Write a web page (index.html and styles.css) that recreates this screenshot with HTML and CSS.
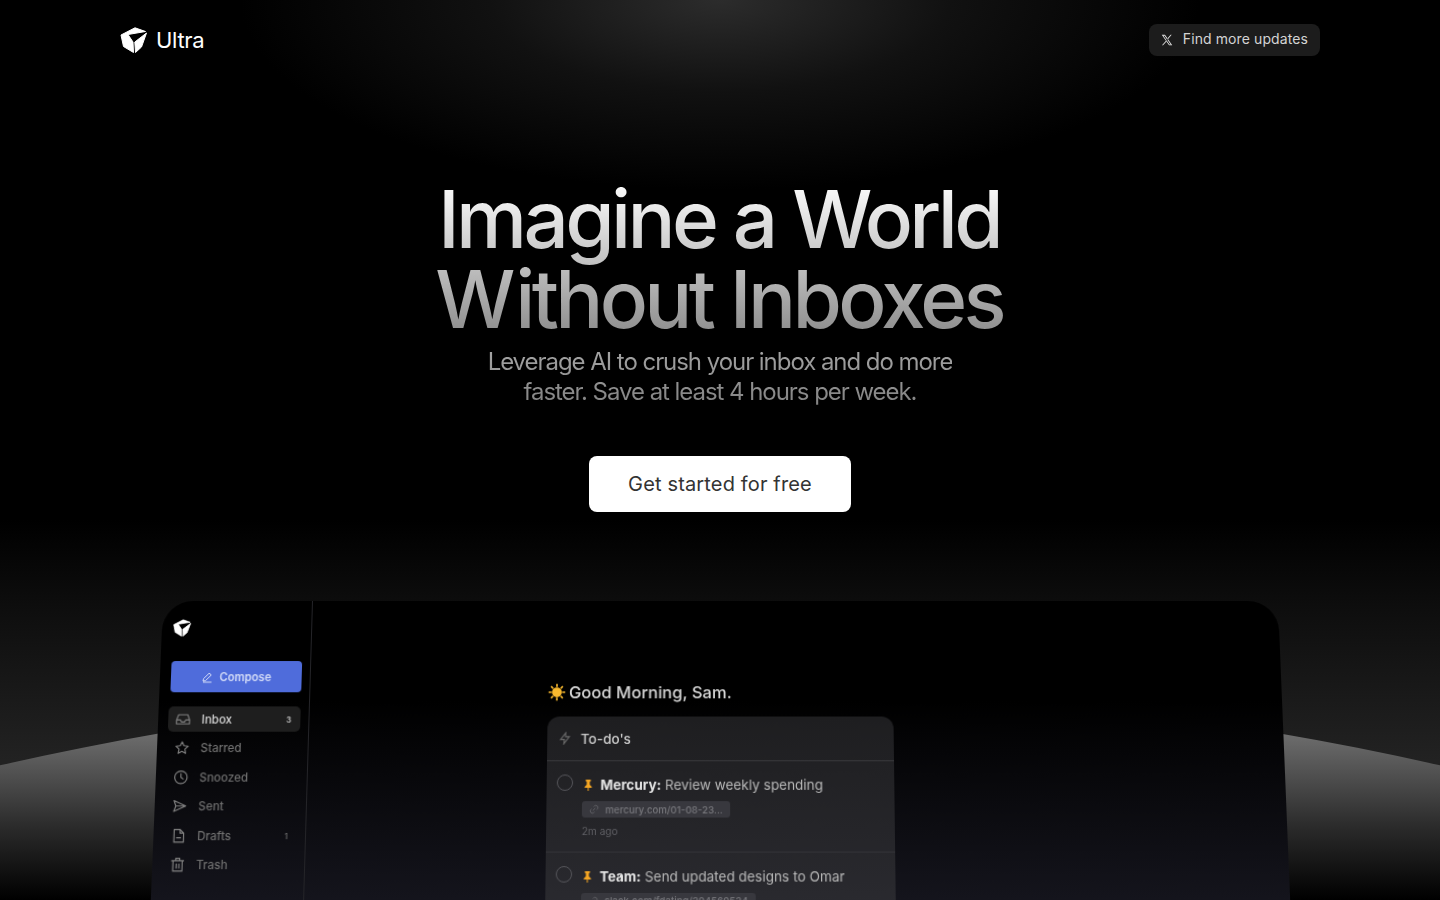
FILE: index.html
```html
<!DOCTYPE html>
<html lang="en">
<head>
    <title>Ultra - Imagine a World Without Inboxes</title>
    <link rel="stylesheet" href="styles.css">
</head>
<body>

<!-- Background glow and planet -->
<div class="top-glow"></div>
<div class="horizon-glow"></div>
<div class="planet"></div>

<header class="nav">
    <a class="brand" href="#">
        <svg class="brand-logo" viewBox="0 0 27 26"><path d="M1 8 15 .8 25.500 4.500 8 7.500 13 15 13.500 25.500 3.500 19.500Z" fill="#fff" stroke="#fff" stroke-linejoin="round"/><path d="M26.500 6 21.500 20 15.500 25.500 14.800 15Z" fill="#fff" stroke="#fff" stroke-linejoin="round"/></svg>
        <span>Ultra</span>
    </a>
    <a class="updates" href="#">
        <svg class="x-icon" viewBox="0 0 24 24"><path d="M3 3h5.500l12.500 18h-5.500L3 3Z M5.800 4.500l10.500 15h2L7.800 4.500h-2Z M20 3h-1.800l-6.300 7.200 1 1.400L20 3Z M10.600 12.800 3.400 21h1.800l6.300-7 -0.900-1.200Z" fill="#e4e4e4" fill-rule="evenodd"/></svg>
        Find more updates
    </a>
</header>

<main class="hero">
    <h1>Imagine a World<br><span class="wide-w">W</span>ithout Inboxes</h1>
    <p class="lead">Leverage AI to crush your inbox and do more<br>faster. Save at least 4 hours per week.</p>
    <a class="cta" href="#">Get started for free</a>
</main>

<!-- App preview tilted back a little -->
<section class="app">
    <aside class="sidebar">
        <svg class="app-logo" viewBox="0 0 27 26"><path d="M1 8 15 .8 25.500 4.500 8 7.500 13 15 13.500 25.500 3.500 19.500Z" fill="#fff" stroke="#fff" stroke-linejoin="round"/><path d="M26.500 6 21.500 20 15.500 25.500 14.800 15Z" fill="#fff" stroke="#fff" stroke-linejoin="round"/></svg>
        <div class="compose">
            <svg class="pen" viewBox="0 0 24 24"><path d="M4 20l1-5L16 4l4 4L9 19l-5 1Z M4 22h17" fill="none" stroke="#d5ddf8" stroke-width="2"/></svg>
            Compose
        </div>
        <ul class="menu">
            <li class="menu-item active">
                <svg viewBox="0 0 24 24"><path d="M2 13l3-8h14l3 8v6H2v-6Z M2 13h6l1.500 3h5L16 13h6" /></svg>
                <span>Inbox</span><em>3</em>
            </li>
            <li class="menu-item">
                <svg viewBox="0 0 24 24"><path d="M12 3l2.800 5.900 6.400.8-4.700 4.400 1.200 6.400L12 17.400l-5.700 3.100 1.200-6.400-4.700-4.400 6.400-.8L12 3Z"/></svg>
                <span>Starred</span>
            </li>
            <li class="menu-item">
                <svg viewBox="0 0 24 24"><circle cx="12" cy="12" r="9.500"/><path d="M12 6.500V12l3.500 2.500"/></svg>
                <span>Snoozed</span>
            </li>
            <li class="menu-item">
                <svg viewBox="0 0 24 24"><path d="M3 4l18 8-18 8 3-8-3-8Z M6 12h15"/></svg>
                <span>Sent</span>
            </li>
            <li class="menu-item">
                <svg viewBox="0 0 24 24"><path d="M5 2.500h9l5.500 5.500v13.500H5v-19Z M14 2.500V8h5.500 M9 15h6"/></svg>
                <span>Drafts</span><em>1</em>
            </li>
            <li class="menu-item">
                <svg viewBox="0 0 24 24"><path d="M3 6h18 M9 6V2.500h6V6 M5 6v15.500h14V6 M10 11v6 M14 11v6"/></svg>
                <span>Trash</span>
            </li>
        </ul>
    </aside>

    <div class="inbox">
        <h2 class="greeting"><svg class="sun" viewBox="0 0 24 24"><circle cx="12" cy="12" r="6.500" fill="#f9b92e"/><path d="M12 1v4 M12 19v4 M1 12h4 M19 12h4 M4.200 4.200l2.800 2.800 M17 17l2.800 2.800 M4.200 19.800 7 17 M17 7l2.800-2.800" stroke="#f9b92e" stroke-width="2.200"/></svg>Good Morning, Sam.</h2>
        <div class="todo-card">
            <div class="todo-head">
                <svg class="bolt" viewBox="0 0 24 24"><path d="M13.500 2 4 14h7l-1 8 10-13h-7l.5-7Z"/></svg>
                To-do's
            </div>
            <div class="todo-row">
                <span class="check"></span>
                <div class="todo-body">
                    <p class="todo-title"><svg class="pin" viewBox="0 0 24 24"><path d="M7 2h10v3l-2 1v6l4 4v2h-6v6h-2v-6H5v-2l4-4V6L7 5V2Z" fill="#f5a623"/></svg><strong>Mercury:</strong> Review weekly spending</p>
                    <span class="chip"><svg viewBox="0 0 24 24"><path d="M9 15l6-6 M11 6l2-2a5 5 0 0 1 7 7l-2 2 M13 18l-2 2a5 5 0 0 1-7-7l2-2"/></svg>mercury.com/01-08-23...</span>
                    <p class="todo-time">2m ago</p>
                </div>
            </div>
            <div class="todo-row">
                <span class="check"></span>
                <div class="todo-body">
                    <p class="todo-title"><svg class="pin" viewBox="0 0 24 24"><path d="M7 2h10v3l-2 1v6l4 4v2h-6v6h-2v-6H5v-2l4-4V6L7 5V2Z" fill="#f5a623"/></svg><strong>Team:</strong> Send updated designs to Omar</p>
                    <span class="chip"><svg viewBox="0 0 24 24"><path d="M9 15l6-6 M11 6l2-2a5 5 0 0 1 7 7l-2 2 M13 18l-2 2a5 5 0 0 1-7-7l2-2"/></svg>slack.com/fdating/394569534</span>
                </div>
            </div>
        </div>
    </div>
</section>

</body>
</html>
```

FILE: styles.css
```css
/* Reset and General Styles */
* {
    margin: 0;
    padding: 0;
    box-sizing: border-box;
}

html, body {
    height: 900px;
    overflow: hidden;
}

body {
    position: relative;
    background: #000;
    color: #fff;
    font-family: 'Inter', 'Liberation Sans', sans-serif;
}

a {
    text-decoration: none;
}

/* Background layers */
.top-glow {
    position: absolute;
    left: 240px;
    top: -190px;
    width: 960px;
    height: 380px;
    background: radial-gradient(closest-side, #2c2c2c, #111 48%, rgba(0, 0, 0, 0));
}

.horizon-glow {
    position: absolute;
    left: 0;
    right: 0;
    top: 520px;
    height: 280px;
    background: linear-gradient(180deg, #000, #0d0d0d 84px, #222 240px);
}

.planet {
    position: absolute;
    left: -2547px;
    top: 685px;
    width: 6534px;
    height: 6534px;
    border-radius: 50%;
    background: linear-gradient(180deg, #7c7c7c 0, #6c6c6c 50px, #2c2c2c 140px, #000 215px);
}

/* Top bar */
.nav {
    position: relative;
    display: flex;
    justify-content: space-between;
    align-items: center;
    padding: 24px 120px 0;
}

.brand {
    display: flex;
    align-items: center;
    gap: 9px;
    color: #fff;
    font-size: 22px;
    line-height: 32px;
    letter-spacing: -0.3px;
}

.brand-logo {
    width: 27px;
    height: 26px;
}

.updates {
    display: flex;
    align-items: center;
    gap: 9px;
    height: 32px;
    padding: 0 12px 3px 11px;
    border-radius: 8px;
    background: #1c1c1c;
    color: #d4d4d4;
    font-size: 14px;
    font-weight: 400;
    letter-spacing: 0.1px;
}

.x-icon {
    width: 14px;
    height: 14px;
    margin-top: 3px;
}

/* Hero */
.hero {
    position: relative;
    display: flex;
    flex-direction: column;
    align-items: center;
    padding-top: 123px;
    text-align: center;
}

h1 {
    padding-right: 2px;
    font-size: 80px;
    line-height: 80px;
    font-weight: 500;
    letter-spacing: -3.700px;
    background: linear-gradient(180deg, #fff 0%, #8a8a8a 100%);
    -webkit-background-clip: text;
    background-clip: text;
    color: transparent;
}

/* W sits a bit further from the i than the default kerning */
.wide-w {
    letter-spacing: -0.200px;
}

.lead {
    margin-top: 8px;
    font-size: 24px;
    line-height: 30px;
    letter-spacing: -1.050px;
    background: linear-gradient(180deg, #a6a6a6, #828282);
    -webkit-background-clip: text;
    background-clip: text;
    color: transparent;
}

.cta {
    display: flex;
    align-items: center;
    justify-content: center;
    width: 262px;
    height: 56px;
    margin-top: 49px;
    border-radius: 8px;
    background: #fff;
    color: #333;
    font-size: 20px;
    font-weight: 400;
    letter-spacing: 0.15px;
}

/* App preview */
.app {
    position: absolute;
    left: 163px;
    top: 601px;
    width: 1115px;
    height: 420px;
    display: flex;
    border-radius: 30px 30px 0 0;
    background: linear-gradient(180deg, #000 0, #000 100px, #171720 320px);
    color: #ddd;
    transform: perspective(1200px) rotateX(5deg);
    transform-origin: 50% 0;
    filter: blur(0.5px);
}

.sidebar {
    width: 150px;
    flex-shrink: 0;
    padding: 18px 8px 0 10px;
    border-right: 1px solid #242428;
}

.app-logo {
    display: block;
    width: 18px;
    height: 18px;
    margin-left: 1px;
}

.compose {
    display: flex;
    align-items: center;
    justify-content: center;
    gap: 6px;
    height: 31px;
    margin: 24px 0 14px 1px;
    border-radius: 4px;
    background: #4f6cdb;
    color: #d5ddf8;
    font-size: 11.200px;
    font-weight: 600;
}

.pen {
    width: 12px;
    height: 12px;
}

.menu {
    list-style: none;
}

.menu-item {
    display: flex;
    align-items: center;
    height: 25px;
    margin-bottom: 3.500px;
    padding: 0 9px 0 7px;
    border-radius: 5px;
    color: #6f6f6f;
    font-size: 11.500px;
    font-weight: 500;
}

.menu-item.active {
    background: #1e1e1e;
    color: #d8d8d8;
}

.menu-item svg {
    width: 15.500px;
    height: 15.500px;
    margin-right: 10.500px;
    fill: none;
    stroke: #808080;
    stroke-width: 1.800;
    stroke-linejoin: round;
    stroke-linecap: round;
}

.menu-item em {
    margin-left: auto;
    font-style: normal;
    font-size: 8px;
}

/* Main column */
.inbox {
    padding: 81px 0 0 236px;
    width: 600px;
}

.greeting {
    display: flex;
    align-items: center;
    gap: 3px;
    font-size: 16.500px;
    line-height: 20px;
    font-weight: 500;
    color: #d8d8d8;
}

.sun {
    width: 18px;
    height: 18px;
}

.todo-card {
    width: 343px;
    margin-top: 14px;
    border-radius: 12px 12px 0 0;
    background: linear-gradient(180deg, #1e1e20, #2c2c32);
}

.todo-head {
    display: flex;
    align-items: center;
    gap: 9px;
    height: 44px;
    padding-left: 11px;
    border-bottom: 1px solid #38383c;
    font-size: 13.500px;
    font-weight: 500;
    color: #ccc;
}

.bolt {
    width: 13px;
    height: 13px;
    fill: none;
    stroke: #6a6a6a;
    stroke-width: 2;
}

.todo-row {
    display: flex;
    gap: 9px;
    height: 88.500px;
    padding: 13px 10px 0;
    border-bottom: 1px solid #333338;
}

.check {
    width: 16px;
    height: 16px;
    border-radius: 50%;
    border: 1px solid #55555a;
    flex-shrink: 0;
}

.todo-title {
    display: flex;
    align-items: center;
    font-size: 13.400px;
    line-height: 20px;
    color: #b8b8b8;
    white-space: pre;
}

.todo-title strong {
    color: #e4e4e4;
    font-weight: 700;
}

.pin {
    width: 12px;
    height: 12px;
    margin-right: 6px;
}

.chip {
    display: inline-flex;
    align-items: center;
    gap: 6px;
    height: 16px;
    margin-top: 6px;
    padding: 0 7px;
    border-radius: 3px;
    background: #38383e;
    color: #77777c;
    font-size: 9.600px;
    font-weight: 500;
}

.chip svg {
    width: 10px;
    height: 10px;
    fill: none;
    stroke: #66666b;
    stroke-width: 2;
}

.todo-time {
    margin-top: 6px;
    font-size: 10px;
    color: #5f5f64;
}
```
